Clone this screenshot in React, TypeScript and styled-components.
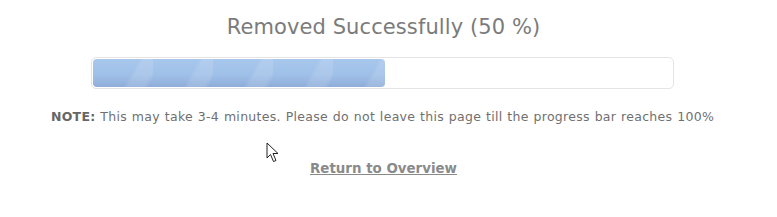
import styled, { createGlobalStyle } from "styled-components";

const GlobalStyle = createGlobalStyle`
  html, body {
    margin: 0;
    padding: 0;
    background: #fff;
  }
  body {
    font-family: "DejaVu Sans", Verdana, sans-serif;
  }
`;

const Page = styled.div`
  position: relative;
  width: 777px;
  height: 217px;
  display: flex;
  flex-direction: column;
  align-items: center;
  padding-top: 13px;
  box-sizing: border-box;
`;

const Title = styled.h2`
  margin: 0 0 0 -10px;
  color: #7b7b7b;
  font-size: 21px;
  font-weight: 400;
  line-height: 28px;
  letter-spacing: 0.1px;
`;

// progress bar

const BarTrack = styled.div`
  width: 583px;
  height: 32px;
  margin-top: 16px;
  margin-left: -12px;
  border: 1px solid #e4e4e4;
  border-radius: 5px;
  background: #fff;
  box-sizing: border-box;
  padding: 1px;
`;

interface BarFillProps {
  $percent: number;
}

const BarFill = styled.div<BarFillProps>`
  width: ${(props) => props.$percent}%;
  height: 100%;
  border-radius: 4px;
  background-color: #9bbbe3;
  background-image: linear-gradient(
      120deg,
      rgba(255, 255, 255, 0) 0px,
      rgba(255, 255, 255, 0) 40px,
      rgba(255, 255, 255, 0.12) 44px,
      rgba(255, 255, 255, 0.12) 58px,
      rgba(255, 255, 255, 0) 62px
    ),
    linear-gradient(to bottom, #a8c7ec 0%, #9fc0e8 55%, #90add9 100%);
  background-size: 60px 100%, 100% 100%;
`;

const Note = styled.p`
  margin: 20px 0 0 -12px;
  color: #707070;
  font-size: 12.5px;
  line-height: 15px;
  letter-spacing: 0.3px;
  word-spacing: 0.5px;

  b {
    font-weight: 700;
    color: #666;
  }
`;

const ReturnLink = styled.a`
  margin-top: 37px;
  margin-left: -10px;
  color: #8a8a8a;
  font-size: 13.4px;
  font-weight: 700;
  line-height: 16px;
  text-decoration: underline;
  cursor: pointer;
`;

const Cursor = styled.svg`
  position: absolute;
  left: 266px;
  top: 142px;
`;

export default function App() {
  return (
    <>
      <GlobalStyle />
      <Page>
        <Title>Removed Successfully (50 %)</Title>
        <BarTrack>
          <BarFill $percent={50.5} />
        </BarTrack>
        <Note>
          <b>NOTE:</b> This may take 3-4 minutes. Please do not leave this page
          till the progress bar reaches 100%
        </Note>
        <ReturnLink>Return to Overview</ReturnLink>
        <Cursor width="14" height="21" viewBox="0 0 14 21">
          <path
            d="M1 1 L1 16 L4.5 12.5 L7.5 19.5 L10 18.5 L7 11.5 L12 11.5 Z"
            fill="#fff"
            stroke="#222"
            strokeWidth="1"
            strokeLinejoin="miter"
          />
        </Cursor>
      </Page>
    </>
  );
}
